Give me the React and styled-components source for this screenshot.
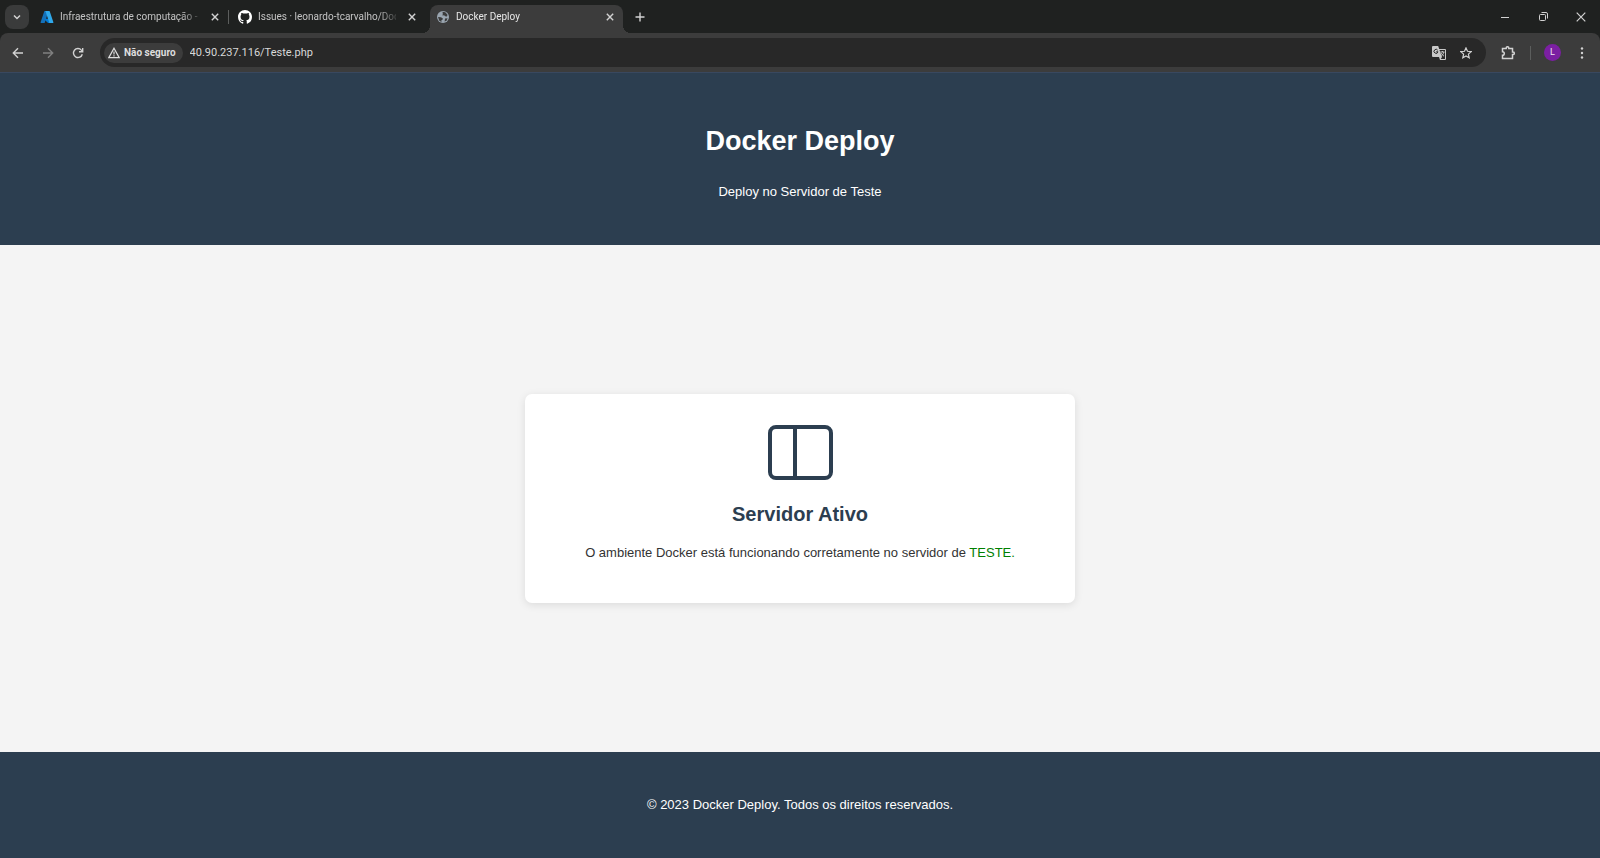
import React from "react";
import styled, { createGlobalStyle } from "styled-components";

const GlobalStyle = createGlobalStyle`
  *, *::before, *::after { box-sizing: border-box; }
  body { margin: 0; background: #f4f4f4; font-family: "Liberation Sans", Arial, sans-serif; }
  h1, h2, p { margin: 0; }
  button, input { font: inherit; color: inherit; border: 0; background: none; padding: 0; margin: 0; }
  svg { display: block; flex: none; }
`;

const Screen = styled.div`
  min-height: 100vh;
  display: flex;
  flex-direction: column;
`;

/* Browser window */
const Chrome = styled.div`
  background: #1f2120;
  color: #dedede;
  font-family: Roboto, "Open Sans", sans-serif;
  font-size: 10px;
`;

const TabStrip = styled.div`
  height: 33px;
  display: flex;
  align-items: center;
  padding-left: 5px;
`;

const Gap = styled.span`
  width: ${(p) => p.$w}px;
  flex: none;
`;

const Spacer = styled.div`
  flex: 1;
`;

const IconButton = styled.button`
  width: ${(p) => p.$w || 24}px;
  height: 24px;
  flex: none;
  display: flex;
  align-items: center;
  justify-content: center;
  color: ${(p) => (p.$dim ? "#808080" : "#d2d2d2")};
`;

const TabSearch = styled(IconButton)`
  background: #3a3b3b;
  border-radius: 8px;
`;

const Tab = styled.div`
  position: relative;
  width: ${(p) => p.$w}px;
  height: 28px;
  align-self: flex-end;
  display: flex;
  align-items: center;
  gap: 6px;
  padding: 0 3px 4px 6px;
  border-radius: 8px 8px 0 0;
  color: ${(p) => (p.$active ? "#e6e6e6" : "#c4c4c4")};
  background: ${(p) => (p.$active ? "#3c3c3c" : "none")};

  &::before,
  &::after {
    content: "";
    display: ${(p) => (p.$active ? "block" : "none")};
    position: absolute;
    bottom: 0;
    width: 8px;
    height: 8px;
  }
  &::before {
    left: -8px;
    background: radial-gradient(circle at 0 0, transparent 8px, #3c3c3c 8px);
  }
  &::after {
    right: -8px;
    background: radial-gradient(circle at 100% 0, transparent 8px, #3c3c3c 8px);
  }
`;

const TabTitle = styled.button`
  flex: 1;
  min-width: 0;
  overflow: hidden;
  white-space: nowrap;
  text-align: left;
  line-height: 16px;
  mask-image: linear-gradient(to right, #000 calc(100% - 18px), rgba(0, 0, 0, 0.2));
`;

const Divider = styled.span`
  width: 1px;
  height: 14px;
  flex: none;
  background: #5c5e5d;
`;

const Toolbar = styled.div`
  height: 40px;
  display: flex;
  align-items: center;
  padding: 0 6px;
  background: #3c3c3c;
  border-radius: 8px 8px 0 0;
  border-bottom: 1px solid #39485f;
`;

const NavButtons = styled.div`
  display: flex;
  gap: 6px;
  margin-right: 10px;
`;

const Omnibox = styled.form`
  flex: 1;
  height: 29px;
  display: flex;
  align-items: center;
  gap: 7px;
  padding: 0 7px 0 4px;
  margin-right: 10px;
  border-radius: 15px;
  background: #282828;
`;

const OmniboxActions = styled.div`
  display: flex;
`;

const Security = styled.button`
  height: 20px;
  display: flex;
  align-items: center;
  gap: 4px;
  padding: 0 7px 0 4px;
  border-radius: 10px;
  background: #3c3c3c;
  font-weight: 700;
`;

const Address = styled.input`
  flex: 1;
  min-width: 0;
  height: 20px;
  font-size: 11px;
  color: #d8d8d8;
  outline: 0;
`;

const Avatar = styled.button`
  width: 17px;
  height: 17px;
  margin: 0 9px 0 13px;
  border-radius: 50%;
  background: #7b1fa2;
  color: #f0e4f5;
  font-size: 9px;
  line-height: 17px;
  text-align: center;
`;

/* Page */
const Header = styled.header`
  padding: 52px 16px 45px;
  background: #2c3e50;
  color: #fff;
  text-align: center;
`;

const PageTitle = styled.h1`
  font-size: 27px;
  line-height: 32px;
  margin-bottom: 27px;
`;

const Text = styled.p`
  font-size: 13px;
  line-height: 16px;
`;

const Main = styled.main`
  flex: 1;
  display: flex;
  align-items: center;
  justify-content: center;
`;

const Card = styled.section`
  display: flex;
  flex-direction: column;
  align-items: center;
  padding: 31px 60px 42px;
  border-radius: 7px;
  background: #fff;
  color: #333;
  box-shadow: 0 2px 8px rgba(0, 0, 0, 0.1);
`;

const CardTitle = styled.h2`
  margin: 22px 0 19px;
  font-size: 20px;
  line-height: 24px;
  color: #2c3e50;
`;

const Highlight = styled.span`
  color: #008000;
`;

const Footer = styled.footer`
  padding: 45px 16px;
  background: #2c3e50;
  color: #fff;
  text-align: center;
`;

const Line = ({ size = 12, box = 12, d, w = 1.4 }) => (
  <svg width={size} height={size} viewBox={`0 0 ${box} ${box}`} fill="none" stroke="currentColor" strokeWidth={w} aria-hidden="true">
    <path d={d} />
  </svg>
);

const CloseTab = () => (
  <IconButton $w={20} aria-label="Fechar guia">
    <Line size={8} box={8} d="M.8.8l6.4 6.4M7.2.8L.8 7.2" />
  </IconButton>
);

const AzureIcon = () => (
  <svg width="14" height="14" viewBox="0 0 96 96" aria-hidden="true">
    <path fill="#1471ba" d="M33.3 6.5h26L32.3 86.6a4.1 4.1 0 0 1-3.9 2.8H8.1a4.1 4.1 0 0 1-3.9-5.5L29.4 9.3a4.1 4.1 0 0 1 3.9-2.8z" />
    <path fill="#0078d4" d="M71.2 60.3H29.9a1.9 1.9 0 0 0-1.3 3.3l26.5 24.7a4.2 4.2 0 0 0 2.9 1.1h23.4z" />
    <path fill="#2fa8ea" d="M66.6 9.3a4.1 4.1 0 0 0-3.9-2.8h-29a4.1 4.1 0 0 1 3.9 2.8l25.2 74.6a4.1 4.1 0 0 1-3.9 5.5h29a4.1 4.1 0 0 0 3.9-5.5z" />
  </svg>
);

const GithubIcon = () => (
  <svg width="14" height="14" viewBox="0 0 16 16" fill="#fff" aria-hidden="true">
    <path d="M8 0C3.58 0 0 3.58 0 8c0 3.54 2.29 6.53 5.47 7.59.4.07.55-.17.55-.38 0-.19-.01-.82-.01-1.49-2.01.37-2.53-.49-2.69-.94-.09-.23-.48-.94-.82-1.13-.28-.15-.68-.52-.01-.53.63-.01 1.08.58 1.23.82.72 1.21 1.87.87 2.33.66.07-.52.28-.87.51-1.07-1.78-.2-3.64-.89-3.64-3.95 0-.87.31-1.59.82-2.15-.08-.2-.36-1.02.08-2.12 0 0 .67-.21 2.2.82a7.6 7.6 0 0 1 4 0c1.53-1.04 2.2-.82 2.2-.82.44 1.1.16 1.92.08 2.12.51.56.82 1.27.82 2.15 0 3.07-1.87 3.75-3.65 3.95.29.25.54.73.54 1.48 0 1.07-.01 1.93-.01 2.2 0 .21.15.46.55.38A8 8 0 0 0 16 8c0-4.42-3.58-8-8-8z" />
  </svg>
);

const GlobeIcon = () => (
  <svg width="14" height="14" viewBox="0 0 14 14" aria-hidden="true">
    <circle cx="7" cy="7" r="6" fill="#9aa5b0" />
    <path fill="#3c3c3c" d="M6.5 1.8 9.3 2.3 11.5 4.8 11 6.6 9 6.3 8.2 5.2 6.4 5.4 6.8 3.9zM2 7 5 7.2 6.9 8.5 6.5 9.8 5.4 10.2 5.5 12 3.3 10.8zM9 8.6 11.6 8.2 10.6 10.8 8.6 11.6z" />
  </svg>
);

const TranslateIcon = () => (
  <svg width="14" height="14" viewBox="0 0 14 14" aria-hidden="true">
    <path fill="#c8c8c8" d="M1 0h5.2l1 3H13a1 1 0 0 1 1 1v9a1 1 0 0 1-1 1H8l-1-3H1a1 1 0 0 1-1-1V1a1 1 0 0 1 1-1z" />
    <path fill="#282828" d="M7.5 4H13v9H8.8l1.2-2z" />
    <path fill="none" stroke="#282828" d="M5.7 4.2a2 2 0 1 0 .3 1.6H4.2" />
    <path fill="none" stroke="#c8c8c8" d="M8.3 6h4.2M10.4 5v1M11.8 6c-.3 1.8-1.2 3-2.4 3.8M9.3 7.2c.5 1.2 1.5 2.3 2.7 3" />
  </svg>
);

const PanelIcon = () => (
  <svg width="65" height="55" viewBox="0 0 65 55" fill="none" stroke="#2c3e50" strokeWidth="4" aria-hidden="true">
    <rect x="2" y="2" width="61" height="51" rx="6" />
    <path d="M27 2v51" />
  </svg>
);

export default function App() {
  return (
    <Screen>
      <GlobalStyle />
      <Chrome>
        <TabStrip>
          <TabSearch aria-label="Pesquisar guias">
            <Line size={8} box={8} d="M1 2.5l3 3 3-3" w={1.5} />
          </TabSearch>
          <Gap $w={5} />
          <Tab $w={194}>
            <AzureIcon />
            <TabTitle>Infraestrutura de computação -</TabTitle>
            <CloseTab />
          </Tab>
          <Divider />
          <Gap $w={3} />
          <Tab $w={193}>
            <GithubIcon />
            <TabTitle>Issues · leonardo-tcarvalho/Doc</TabTitle>
            <CloseTab />
          </Tab>
          <Gap $w={5} />
          <Tab $w={193} $active>
            <GlobeIcon />
            <TabTitle>Docker Deploy</TabTitle>
            <CloseTab />
          </Tab>
          <Gap $w={5} />
          <IconButton aria-label="Nova guia">
            <Line size={10} box={10} d="M5 .5v9M.5 5h9" />
          </IconButton>
          <Spacer />
          <IconButton $w={38} aria-label="Minimizar">
            <Line size={8} box={8} d="M0 4.5h8" w={1} />
          </IconButton>
          <IconButton $w={38} aria-label="Restaurar">
            <Line size={10} box={10} d="M1.5 3.5a1 1 0 0 1 1-1h4a1 1 0 0 1 1 1v4a1 1 0 0 1-1 1h-4a1 1 0 0 1-1-1zM3.5.5H8A1.5 1.5 0 0 1 9.5 2v4.5" w={1} />
          </IconButton>
          <IconButton $w={38} aria-label="Fechar">
            <Line size={10} box={10} d="M.7.7l8.6 8.6M9.3.7L.7 9.3" w={1.2} />
          </IconButton>
        </TabStrip>
        <Toolbar>
          <NavButtons>
            <IconButton aria-label="Voltar">
              <Line d="M11 6H1.5M6 1.3L1.3 6 6 10.7" />
            </IconButton>
            <IconButton $dim aria-label="Avançar">
              <Line d="M1 6h9.5M6 1.3L10.7 6 6 10.7" />
            </IconButton>
            <IconButton aria-label="Recarregar">
              <Line d="M10.3 7.2a4.5 4.5 0 1 1-.9-4.1L10.5 4.3M10.7 1v3.7H7" />
            </IconButton>
          </NavButtons>
          <Omnibox onSubmit={(e) => e.preventDefault()}>
            <Security type="button">
              <Line d="M6 1.3L11.2 10.6H.8zM6 4.5v3M6 8.2v1.2" w={1.2} />
              Não seguro
            </Security>
            <Address aria-label="Endereço" defaultValue="40.90.237.116/Teste.php" />
            <OmniboxActions>
              <IconButton $w={27} type="button" aria-label="Traduzir">
                <TranslateIcon />
              </IconButton>
              <IconButton $w={27} type="button" aria-label="Favoritar">
                <Line d="M6 .9L7.5 4.3l3.7.3-2.8 2.5.8 3.7L6 8.9 2.8 10.8l.8-3.7L.8 4.6l3.7-.3z" w={1.2} />
              </IconButton>
            </OmniboxActions>
          </Omnibox>
          <IconButton aria-label="Extensões">
            <Line
              size={14}
              box={14}
              d="M1.5 2.5H5.2V2a1.3 1.3 0 0 1 2.6 0v.5H11.5V6H12a1.3 1.3 0 0 1 0 2.6h-.5v3.9h-10V9.3a1.8 1.8 0 0 0 0-3.6z"
              w={1.5}
            />
          </IconButton>
          <Gap $w={10} />
          <Divider />
          <Avatar aria-label="Perfil">L</Avatar>
          <IconButton aria-label="Menu">
            <svg width="4" height="12" viewBox="0 0 4 12" fill="currentColor" aria-hidden="true">
              <circle cx="2" cy="1.5" r="1.2" />
              <circle cx="2" cy="6" r="1.2" />
              <circle cx="2" cy="10.5" r="1.2" />
            </svg>
          </IconButton>
        </Toolbar>
      </Chrome>

      <Header>
        <PageTitle>Docker Deploy</PageTitle>
        <Text>Deploy no Servidor de Teste</Text>
      </Header>
      <Main>
        <Card>
          <PanelIcon />
          <CardTitle>Servidor Ativo</CardTitle>
          <Text>
            O ambiente Docker está funcionando corretamente no servidor de <Highlight>TESTE.</Highlight>
          </Text>
        </Card>
      </Main>
      <Footer>
        <Text>© 2023 Docker Deploy. Todos os direitos reservados.</Text>
      </Footer>
    </Screen>
  );
}
